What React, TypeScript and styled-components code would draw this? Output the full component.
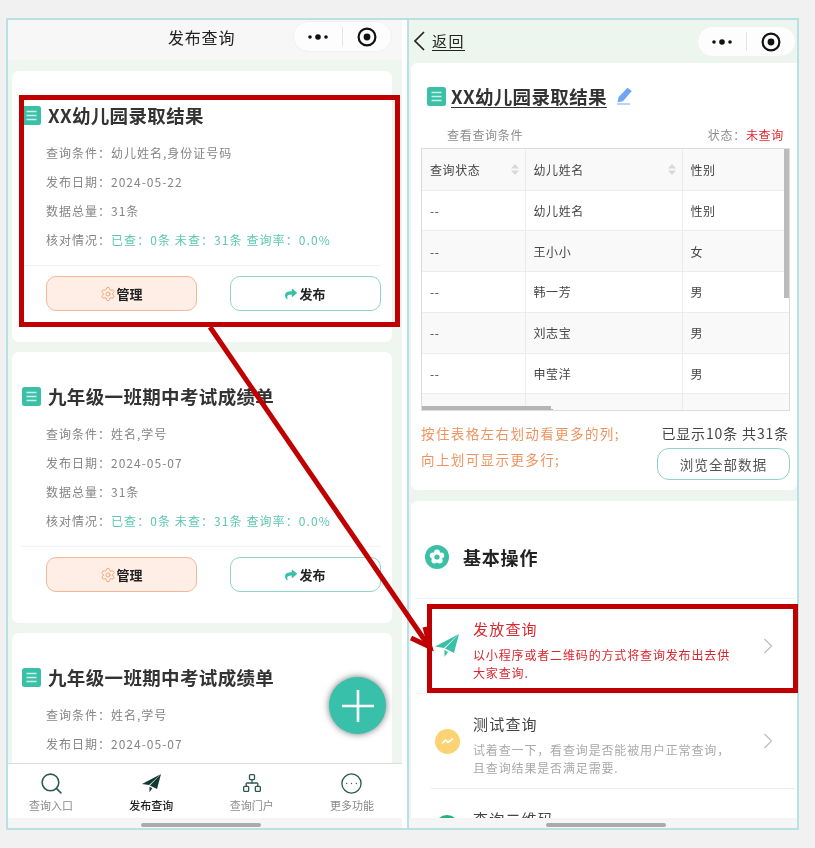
import styled, { createGlobalStyle } from "styled-components";
import { Search, Network, CircleEllipsis, Settings } from "lucide-react";
import { FaShare } from "react-icons/fa";

const GlobalStyle = createGlobalStyle`
    html, body {
        margin: 0;
        padding: 0;
        background: #f1f1f1;
    }
    * {
        box-sizing: border-box;
    }
`;

const Page = styled.div`
    position: relative;
    width: 815px;
    height: 848px;
    padding: 18px 0 0 6px;
    display: flex;
    align-items: flex-start;
    overflow: hidden;
    font-family: "Noto Sans CJK SC", "Noto Sans", sans-serif;
    background: #f1f1f1;
`;

const LeftPhone = styled.section`
    position: relative;
    width: 401px;
    height: 812px;
    display: flex;
    flex-direction: column;
    border: 2px solid #b9e0e3;
    border-right: 0;
    background: #fff;
    padding-right: 5px;
    filter: blur(0.45px);
`;

const RightPhone = styled.section`
    width: 392px;
    height: 812px;
    display: flex;
    flex-direction: column;
    border: 2px solid #b9e0e3;
    background: #ecf5ee;
    filter: blur(0.45px);
`;

const LeftHeader = styled.header`
    height: 40px;
    flex: none;
    display: flex;
    align-items: flex-start;
    padding: 1px 10px 0 160px;
    background: #f7f7f7;
`;

const HeaderTitle = styled.h1`
    margin: 0;
    font-size: 16px;
    font-weight: 400;
    line-height: 32px;
    letter-spacing: 0.8px;
    color: #222;
`;

const Capsule = styled.div`
    width: 99px;
    height: 31px;
    margin-left: auto;
    flex: none;
    display: flex;
    align-items: center;
    border-radius: 16px;
    background: #fdfdfd;
    border: 1px solid #f1f1f1;
`;

const CapsuleSide = styled.span`
    flex: 1;
    height: 100%;
    display: flex;
    align-items: center;
    justify-content: center;
`;

const CapsuleLine = styled.span`
    width: 1px;
    height: 19px;
    background: #e4e4e4;
`;

const CardList = styled.div`
    flex: 1;
    min-height: 0;
    overflow: hidden;
    display: flex;
    flex-direction: column;
    gap: 10px;
    padding: 11px 10px 0 4px;
    background: #eff6f0;
`;

const QueryCard = styled.article`
    flex: none;
    height: 271px;
    padding: 32px 11px 0 10px;
    border-radius: 7px;
    background: #fff;
`;

const TitleRow = styled.div`
    height: 24px;
    display: flex;
    align-items: center;
    gap: 7px;
`;

const CardTitle = styled.h2<{ $underline?: boolean }>`
    margin: 0;
    font-size: 18.5px;
    font-weight: 700;
    line-height: 24px;
    letter-spacing: 0.35px;
    white-space: nowrap;
    color: #333;
    text-decoration: ${(p) => (p.$underline ? "underline" : "none")};
    text-underline-offset: 3px;
`;

const MetaList = styled.div`
    margin: 11px 0 11px 24px;
`;

const MetaRow = styled.div`
    height: 29px;
    font-size: 12px;
    line-height: 29px;
    letter-spacing: 1px;
    color: #858585;
    white-space: nowrap;
`;

const Teal = styled.span`
    color: #5cc7b3;
    letter-spacing: 1.08px;
`;

const CardFoot = styled.div`
    margin-left: -1px;
    padding: 10px 0 0 25px;
    display: flex;
    justify-content: space-between;
    border-top: 1px solid #f3f3f3;
`;

const ActionButton = styled.button<{ $warm?: boolean }>`
    width: 151px;
    height: 35px;
    display: flex;
    align-items: center;
    justify-content: center;
    padding: 0;
    border-radius: 10px;
    border: 1px solid ${(p) => (p.$warm ? "#f3b899" : "#8fd4c8")};
    background: ${(p) => (p.$warm ? "#feeee6" : "#fff")};
    font-family: inherit;
    font-size: 13px;
    font-weight: 700;
    color: #222;
`;

const Fab = styled.button`
    position: absolute;
    left: 321px;
    top: 657px;
    width: 57px;
    height: 57px;
    padding: 0;
    display: flex;
    align-items: center;
    justify-content: center;
    border: 0;
    border-radius: 50%;
    background: #39c0ab;
    box-shadow: 0 0 7px rgba(0, 0, 0, 0.55);
`;

const TabBar = styled.nav`
    height: 55px;
    flex: none;
    display: flex;
    justify-content: space-between;
    padding-right: 7px;
    background: #fff;
    border-top: 1px solid #dcdcdc;
`;

const TabItem = styled.div<{ $active?: boolean }>`
    width: 86px;
    display: flex;
    flex-direction: column;
    align-items: center;
    padding-top: 8px;
    font-size: 11px;
    line-height: 16px;
    gap: 3px;
    font-weight: ${(p) => (p.$active ? 500 : 400)};
    color: ${(p) => (p.$active ? "#222" : "#8a8a8a")};
`;

const TabIcon = styled.span`
    height: 22px;
    display: flex;
    align-items: center;
    justify-content: center;
`;

const HomeBar = styled.div`
    height: 10px;
    flex: none;
    padding-top: 5px;
    display: flex;
    justify-content: center;
    background: #f5f5f5;
`;

const HomeHandle = styled.span<{ $shift: number }>`
    width: 120px;
    height: 4px;
    margin-left: ${(p) => p.$shift}px;
    border-radius: 2px;
    background: #aaa;
`;

const RightHeader = styled.header`
    height: 43px;
    flex: none;
    display: flex;
    align-items: flex-start;
    padding: 6px 1px 0 4px;
    background: #ecf5ee;
`;

const BackLink = styled.a`
    display: flex;
    align-items: center;
    gap: 7px;
    height: 29px;
    font-size: 15px;
    letter-spacing: 1.5px;
    color: #222;
    text-decoration: underline;
    text-underline-offset: 3px;
`;

const RightScroll = styled.div`
    flex: 1;
    min-height: 0;
    overflow: hidden;
    display: flex;
    flex-direction: column;
    gap: 11px;
    padding-left: 2px;
    background: #ecf5ee;
`;

const ResultCard = styled.article`
    flex: none;
    padding: 21px 7px 10px 10px;
    border-radius: 6px 0 6px 6px;
    background: #fff;
`;

const ResultTitle = styled(TitleRow)`
    padding-left: 6px;
    gap: 5px;
`;

const PenWrap = styled.span`
    margin-left: 4px;
    display: flex;
`;

const ConditionRow = styled.div`
    height: 20px;
    margin-top: 17px;
    padding: 0 6px 0 26px;
    display: flex;
    justify-content: space-between;
    font-size: 12px;
    line-height: 20px;
    letter-spacing: 0.7px;
    color: #8e8e8e;
`;

const StatusText = styled.span`
    color: #e0272d;
`;

const TableWrap = styled.div`
    position: relative;
    height: 263px;
    margin-top: 3px;
    overflow: hidden;
    border: 1px solid #dcdcdc;
    background: #fff;
`;

const DataTable = styled.table`
    width: 367px;
    table-layout: fixed;
    border-collapse: collapse;
    font-size: 12px;
    letter-spacing: 0.6px;
    color: #444;
`;

const HeadCell = styled.th<{ $w: number }>`
    position: relative;
    width: ${(p) => p.$w}px;
    height: 41px;
    padding: 0 0 0 8px;
    font-weight: 400;
    text-align: left;
    background: #f9f9f9;
    border-right: 1px solid #ececec;
    border-bottom: 1px solid #ececec;
`;

const Row = styled.tr<{ $shade?: boolean }>`
    height: 40.8px;
    background: ${(p) => (p.$shade ? "#f9f9f9" : "#fff")};
`;

const Cell = styled.td`
    padding: 0 0 0 8px;
    border-right: 1px solid #ececec;
    border-bottom: 1px solid #ececec;
`;

const SortMark = styled.svg`
    position: absolute;
    right: 6px;
    top: 15px;
`;

const VerticalBar = styled.span`
    position: absolute;
    right: 0;
    top: 0;
    width: 5px;
    height: 149px;
    background: #bbb;
`;

const HorizontalBar = styled.span`
    position: absolute;
    left: 0;
    bottom: 0;
    width: 129px;
    height: 4px;
    background: #b5b5b5;
`;

const NotesRow = styled.div`
    margin-top: 9px;
    display: flex;
    justify-content: space-between;
`;

const Hint = styled.div`
    font-size: 13.5px;
    line-height: 26px;
    letter-spacing: 1.4px;
    color: #ee9460;
    white-space: nowrap;
`;

const NotesRight = styled.div`
    display: flex;
    flex-direction: column;
    align-items: flex-end;
`;

const CountText = styled.div`
    height: 28px;
    padding-right: 1px;
    font-size: 14px;
    line-height: 26px;
    letter-spacing: 0.85px;
    color: #444;
    white-space: nowrap;
`;

const BrowseButton = styled.button`
    width: 133px;
    height: 32px;
    padding: 0;
    border-radius: 12px;
    border: 1px solid #8fd4c8;
    background: #fff;
    font-family: inherit;
    font-size: 13.5px;
    letter-spacing: 1.1px;
    color: #555;
`;

const ActionsCard = styled.article`
    flex: 1;
    min-height: 0;
    overflow: hidden;
    border-radius: 6px 0 0 0;
    background: #fff;
`;

const SectionHead = styled.div`
    height: 24px;
    margin: 44px 0 29px 14px;
    display: flex;
    align-items: center;
    gap: 14px;
`;

const SectionTitle = styled.h3`
    margin: 0;
    font-size: 18px;
    font-weight: 700;
    letter-spacing: 0.8px;
    color: #222;
`;

const OpItem = styled.div<{ $line?: boolean }>`
    margin-left: ${(p) => (p.$line ? 20 : 4)}px;
    margin-right: 2px;
    min-height: ${(p) => (p.$line ? 76 : 0)}px;
    padding: 11px 0 11px ${(p) => (p.$line ? 4 : 20)}px;
    display: flex;
    align-items: center;
    border-top: 1px solid ${(p) => (p.$line ? "#ececec" : "#f3f3f3")};
`;

const OpIcon = styled.span`
    width: 38px;
    flex: none;
    display: flex;
`;

const OpText = styled.div<{ $red?: boolean }>`
    width: 262px;
    align-self: flex-start;
    padding-top: 9px;
    color: ${(p) => (p.$red ? "#d9272e" : "#a9a9a9")};
`;

const OpTitle = styled.div<{ $red?: boolean }>`
    margin-bottom: 7px;
    font-size: 15px;
    line-height: 20px;
    letter-spacing: 1.2px;
    color: ${(p) => (p.$red ? "#d9272e" : "#444")};
`;

const OpDesc = styled.div`
    font-size: 12px;
    line-height: 18px;
    letter-spacing: 0.85px;
`;

const OpChevron = styled.svg`
    margin-left: 28px;
    flex: none;
`;

const Highlight = styled.div<{ $x: number; $y: number; $w: number; $h: number }>`
    position: absolute;
    left: ${(p) => p.$x}px;
    top: ${(p) => p.$y}px;
    width: ${(p) => p.$w}px;
    height: ${(p) => p.$h}px;
    border: 5px solid #c00000;
`;

const ArrowLayer = styled.svg`
    position: absolute;
    left: 0;
    top: 0;
    pointer-events: none;
`;

const ListIcon = ({ size = 19 }: { size?: number }) => (
    <svg width={size} height={size} viewBox="0 0 19 19" style={{ flex: "none" }}>
        <rect width="19" height="19" rx="2.5" fill="#3bc0a8" />
        <path d="M4.5 5.5h10M4.5 9.5h10M4.5 13.5h10" stroke="#cdf1ea" strokeWidth="1.5" />
    </svg>
);

const CapsuleIcons = () => (
    <Capsule>
        <CapsuleSide>
            <svg width="22" height="8" viewBox="0 0 22 8">
                <circle cx="3" cy="4" r="1.8" fill="#111" />
                <circle cx="11" cy="4" r="2.8" fill="#111" />
                <circle cx="19" cy="4" r="1.8" fill="#111" />
            </svg>
        </CapsuleSide>
        <CapsuleLine />
        <CapsuleSide>
            <svg width="20" height="20" viewBox="0 0 20 20">
                <circle cx="10" cy="10" r="8.4" fill="none" stroke="#111" strokeWidth="2.2" />
                <circle cx="10" cy="10" r="3.4" fill="#111" />
            </svg>
        </CapsuleSide>
    </Capsule>
);

const PlaneIcon = ({ size, color }: { size: number; color: string }) => (
    <svg width={size} height={size} viewBox="0 0 24 24">
        <path d="M0 12.5 24 0 9 14Z" fill={color} />
        <path d="M24 0 19 19 10 14.5Z" fill={color} />
        <path d="M9.5 16 13 18 9.5 23Z" fill={color} />
    </svg>
);

const Chevron = () => (
    <OpChevron width="10" height="16" viewBox="0 0 10 16">
        <path d="M1.5 1 8.5 8 1.5 15" fill="none" stroke="#bdbdbd" strokeWidth="1.2" />
    </OpChevron>
);

const Sort = () => (
    <SortMark width="8" height="11" viewBox="0 0 8 11">
        <path d="M4 0 8 4.5H0Z" fill="#d8d8d8" />
        <path d="M4 11 8 6.5H0Z" fill="#d8d8d8" />
    </SortMark>
);

// the third card runs under the tab bar, only its first rows are ever seen
const cards = [
    { title: "XX幼儿园录取结果", cond: "幼儿姓名,身份证号码", date: "2024-05-22", full: true },
    { title: "九年级一班期中考试成绩单", cond: "姓名,学号", date: "2024-05-07", full: true },
    { title: "九年级一班期中考试成绩单", cond: "姓名,学号", date: "2024-05-07", full: false },
];

const tabs = [
    { label: "查询入口", icon: <Search size={25} strokeWidth={1.5} color="#2f5a50" /> },
    { label: "发布查询", icon: <PlaneIcon size={19} color="#0f3a32" />, active: true },
    { label: "查询门户", icon: <Network size={20} strokeWidth={1.6} color="#2f5a50" /> },
    { label: "更多功能", icon: <CircleEllipsis size={23} strokeWidth={1.4} color="#2f5a50" /> },
];

const rows = [
    { name: "幼儿姓名", sex: "性别" },
    { name: "王小小", sex: "女" },
    { name: "韩一芳", sex: "男" },
    { name: "刘志宝", sex: "男" },
    { name: "申莹洋", sex: "男" },
    { name: "张小雨", sex: "" },
];

export default function App() {
    return (
        <Page>
            <GlobalStyle />
            <LeftPhone>
                <LeftHeader>
                    <HeaderTitle>发布查询</HeaderTitle>
                    <CapsuleIcons />
                </LeftHeader>
                <CardList>
                    {cards.map((c, i) => (
                        <QueryCard key={i}>
                            <TitleRow>
                                <ListIcon />
                                <CardTitle>{c.title}</CardTitle>
                            </TitleRow>
                            <MetaList>
                                <MetaRow>查询条件：{c.cond}</MetaRow>
                                <MetaRow>发布日期：{c.date}</MetaRow>
                                {c.full && <MetaRow>数据总量：31条</MetaRow>}
                                {c.full && (
                                    <MetaRow>
                                        核对情况：<Teal>已查：0条 未查：31条 查询率：0.0%</Teal>
                                    </MetaRow>
                                )}
                            </MetaList>
                            {c.full && (
                                <CardFoot>
                                    <ActionButton $warm>
                                        <Settings size={16} strokeWidth={1.4} color="#f2a26f" />
                                        管理
                                    </ActionButton>
                                    <ActionButton>
                                        <FaShare size={12} color="#3bc0a8" style={{ marginRight: 2 }} />
                                        发布
                                    </ActionButton>
                                </CardFoot>
                            )}
                        </QueryCard>
                    ))}
                </CardList>
                <Fab>
                    <svg width="34" height="34" viewBox="0 0 34 34">
                        <path d="M17 1v32M1 17h32" stroke="#fff" strokeWidth="2.6" />
                    </svg>
                </Fab>
                <TabBar>
                    {tabs.map((t) => (
                        <TabItem key={t.label} $active={t.active}>
                            <TabIcon>{t.icon}</TabIcon>
                            {t.label}
                        </TabItem>
                    ))}
                </TabBar>
                <HomeBar>
                    <HomeHandle $shift={-8} />
                </HomeBar>
            </LeftPhone>

            <RightPhone>
                <RightHeader>
                    <BackLink>
                        <svg width="12" height="20" viewBox="0 0 12 20">
                            <path d="M11 1 2 10l9 9" fill="none" stroke="#222" strokeWidth="1.7" />
                        </svg>
                        返回
                    </BackLink>
                    <CapsuleIcons />
                </RightHeader>
                <RightScroll>
                    <ResultCard>
                        <ResultTitle>
                            <ListIcon />
                            <CardTitle $underline>XX幼儿园录取结果</CardTitle>
                            <PenWrap>
                                <svg width="17" height="18" viewBox="0 0 17 18">
                                    <path d="M11.5 0.8 15.8 4 7 14.2 1.6 15.2 2.6 10Z" fill="#6ea6f5" />
                                    <path d="M1 17h13" stroke="#a9c9f8" strokeWidth="1.6" />
                                </svg>
                            </PenWrap>
                        </ResultTitle>
                        <ConditionRow>
                            <span>查看查询条件</span>
                            <span>
                                状态：<StatusText>未查询</StatusText>
                            </span>
                        </ConditionRow>
                        <TableWrap>
                            <DataTable>
                                <thead>
                                    <tr>
                                        <HeadCell $w={103}>
                                            查询状态
                                            <Sort />
                                        </HeadCell>
                                        <HeadCell $w={157}>
                                            幼儿姓名
                                            <Sort />
                                        </HeadCell>
                                        <HeadCell $w={107}>性别</HeadCell>
                                    </tr>
                                </thead>
                                <tbody>
                                    {rows.map((r, i) => (
                                        <Row key={r.name} $shade={i % 2 === 1}>
                                            <Cell>--</Cell>
                                            <Cell>{r.name}</Cell>
                                            <Cell>{r.sex}</Cell>
                                        </Row>
                                    ))}
                                </tbody>
                            </DataTable>
                            <VerticalBar />
                            <HorizontalBar />
                        </TableWrap>
                        <NotesRow>
                            <Hint>
                                按住表格左右划动看更多的列;
                                <br />
                                向上划可显示更多行;
                            </Hint>
                            <NotesRight>
                                <CountText>已显示10条 共31条</CountText>
                                <BrowseButton>浏览全部数据</BrowseButton>
                            </NotesRight>
                        </NotesRow>
                    </ResultCard>
                    <ActionsCard>
                        <SectionHead>
                            <svg width="24" height="24" viewBox="0 0 24 24" style={{ flex: "none" }}>
                                <circle cx="12" cy="12" r="12" fill="#3bc0a8" />
                                <g fill="#fff">
                                    <circle cx="12" cy="7.6" r="3" />
                                    <circle cx="16.2" cy="10.6" r="3" />
                                    <circle cx="14.6" cy="15.5" r="3" />
                                    <circle cx="9.4" cy="15.5" r="3" />
                                    <circle cx="7.8" cy="10.6" r="3" />
                                </g>
                                <circle cx="12" cy="12" r="2.6" fill="#3bc0a8" />
                            </svg>
                            <SectionTitle>基本操作</SectionTitle>
                        </SectionHead>
                        <OpItem>
                            <OpIcon>
                                <PlaneIcon size={24} color="#3bc0a8" />
                            </OpIcon>
                            <OpText $red>
                                <OpTitle $red>发放查询</OpTitle>
                                <OpDesc>以小程序或者二维码的方式将查询发布出去供大家查询.</OpDesc>
                            </OpText>
                            <Chevron />
                        </OpItem>
                        <OpItem>
                            <OpIcon>
                                <svg width="25" height="25" viewBox="0 0 25 25">
                                    <circle cx="12.5" cy="12.5" r="12.5" fill="#fdd273" />
                                    <path d="M7 14.5 10.5 11 13 13.5 18 9.5" fill="none" stroke="#fff" strokeWidth="1.7" />
                                </svg>
                            </OpIcon>
                            <OpText>
                                <OpTitle>测试查询</OpTitle>
                                <OpDesc>试着查一下，看查询是否能被用户正常查询，且查询结果是否满足需要.</OpDesc>
                            </OpText>
                            <Chevron />
                        </OpItem>
                        <OpItem $line>
                            <OpIcon>
                                <svg width="24" height="24" viewBox="0 0 24 24">
                                    <circle cx="12" cy="12" r="12" fill="#22b573" />
                                </svg>
                            </OpIcon>
                            <OpText>
                                <OpTitle>查询二维码</OpTitle>
                            </OpText>
                        </OpItem>
                    </ActionsCard>
                </RightScroll>
                <HomeBar>
                    <HomeHandle $shift={5} />
                </HomeBar>
            </RightPhone>

            <Highlight $x={19} $y={95} $w={381} $h={232} />
            <Highlight $x={427} $y={604} $w={371} $h={89} />
            <ArrowLayer width="815" height="848" viewBox="0 0 815 848">
                <path d="M210 327 428 645" stroke="#c00000" strokeWidth="5" fill="none" />
                <path d="M411 638 430 647 425 627" stroke="#c00000" strokeWidth="5" fill="none" />
            </ArrowLayer>
        </Page>
    );
}
